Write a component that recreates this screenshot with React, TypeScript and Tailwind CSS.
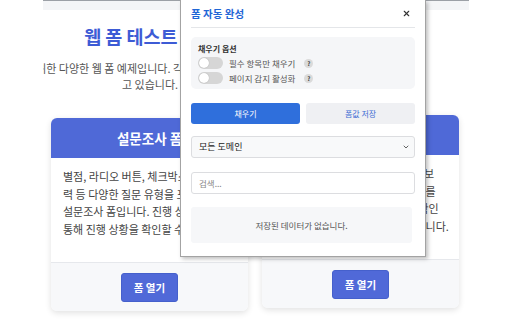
import { ChevronDown, X } from 'lucide-react';

const Toggle = ({ label }: { label: string }) => (
  <div className="flex items-center h-[12px]">
    <div className="w-[25px] h-[12px] rounded-full bg-[#d6d6d6] flex items-center px-[1px]">
      <div className="w-[10px] h-[10px] rounded-full bg-white shadow-[0_0_1px_rgba(0,0,0,0.3)]" />
    </div>
    <span className="ml-[6px] text-[8.5px] leading-[12px] text-[#555]">{label}</span>
    <span className="ml-[9px] w-[9px] h-[9px] rounded-full bg-[#dadada] text-[6px] leading-[9px] font-bold text-[#444] text-center">
      ?
    </span>
  </div>
);

const FormCard = ({
  title,
  lines,
  lifted,
}: {
  title: string;
  lines: string[];
  lifted?: boolean;
}) => (
  <div
    className={`w-[197px] h-[193px] flex flex-col rounded-md bg-white shadow-[0_2px_6px_rgba(0,0,0,0.12)] overflow-hidden ${lifted ? '-translate-y-[3px]' : ''}`}
  >
    <div className="h-[40px] shrink-0 bg-[#4f69d7] flex items-center justify-center text-white text-[13.5px] font-bold">
      {title}
    </div>
    <div className="flex-1 px-[12px] pt-[10px] text-[11px] leading-[17.5px] text-[#444]">
      {lines.map((line, i) => (
        <div key={i} className="whitespace-nowrap">
          {line}
        </div>
      ))}
    </div>
    <div className="h-[49px] shrink-0 border-t border-[#e6e8ec] bg-[#f7f8fa] flex justify-center pt-[10px]">
      <button className="h-[29px] w-[57px] rounded-[3px] border border-[#4560cc] bg-[#5069d8] text-white text-[10.5px] font-semibold">
        폼 열기
      </button>
    </div>
  </div>
);

export default function App() {
  return (
    <div className="relative w-[512px] h-[320px] overflow-hidden bg-white font-['Noto_Sans_CJK_KR','Noto_Sans',sans-serif]">
      {/* page behind the popup */}
      <div className="ml-[43px] w-[426px] h-full overflow-hidden">
        <div className="h-[10px] border-t border-[#9ca0a6] bg-[#f4f5f7]" />
        <div className="bg-white rounded-t-lg h-full">
          <div className="w-[600px] -ml-[193px] text-center pt-[12px]">
            <h1 className="text-[18.5px] leading-[28px] font-bold text-[#3d5bd5]">웹 폼 테스트 모음</h1>
            <p className="mt-[10px] text-[11px] leading-[16px] text-[#555] whitespace-nowrap">
              자동완성 테스트를 위한 다양한 웹 폼 예제입니다. 각 폼은 서로 다른 입력 필드들을 포함하
              <br />
              고 있습니다.
            </p>
          </div>
          <div className="flex gap-[14px] ml-[8px] mt-[26px]">
            <FormCard
              title="설문조사 폼"
              lines={[
                '별점, 라디오 버튼, 체크박스, 텍스트 입',
                '력 등 다양한 질문 유형을 포함한',
                '설문조사 폼입니다. 진행 상태 표시줄을',
                '통해 진행 상황을 확인할 수 있습니다.',
              ]}
            />
            <FormCard
              title="회원가입 폼"
              lifted
              lines={[
                '이름, 이메일, 비밀번호 등 기본 정보',
                '입력과 프로필 사진 업로드 페이지를',
                '포함한 회원가입 폼입니다. 본인 확인',
                '절차로 회원가입을 완료할 수 있습니다.',
              ]}
            />
          </div>
        </div>
      </div>

      {/* extension popup */}
      <div className="absolute left-[180px] top-0 w-[246px] h-[257px] bg-white border-x border-b border-[#a3a3a3] shadow-[2px_2px_4px_rgba(0,0,0,0.25)] px-[10px]">
        <div className="h-[28px] flex items-center justify-between border-b border-[#e4e6e9]">
          <span className="text-[10.5px] font-bold text-[#1f66d6]">폼 자동 완성</span>
          <X className="w-[9px] h-[9px] mr-[4px] text-[#333]" strokeWidth={3} />
        </div>

        <div className="mt-[9px] h-[52px] rounded-[5px] bg-[#f5f6f8] px-[7px] pt-[6px]">
          <div className="text-[8px] leading-[12px] font-semibold text-[#333]">채우기 옵션</div>
          <div className="mt-[2px] flex flex-col gap-[3px]">
            <Toggle label="필수 항목만 채우기" />
            <Toggle label="페이지 감지 활성화" />
          </div>
        </div>

        <div className="mt-[14px] grid grid-cols-2 gap-[6px]">
          <button className="h-[21px] rounded-[3px] bg-[#2f6fdc] text-white text-[8px]">채우기</button>
          <button className="h-[21px] rounded-[3px] bg-[#eff0f3] text-[#3d6dd4] text-[8px]">폼값 저장</button>
        </div>

        <div className="mt-[12px] h-[22px] rounded-[3px] border border-[#dcdde0] bg-[#f8f9fa] flex items-center justify-between pl-[7px] pr-[4px]">
          <span className="text-[9px] text-[#222]">모든 도메인</span>
          <ChevronDown className="w-[8px] h-[8px] text-[#444]" strokeWidth={2.5} />
        </div>

        <div className="mt-[14px] h-[22px] rounded-[3px] border border-[#dcdde0] bg-white flex items-center px-[7px]">
          <span className="text-[8.5px] text-[#888]">검색...</span>
        </div>

        <div className="mt-[13px] h-[36px] w-[221px] rounded-[3px] bg-[#f6f7f9] flex items-center justify-center">
          <span className="text-[8.5px] text-[#555]">저장된 데이터가 없습니다.</span>
        </div>
      </div>
    </div>
  );
}
